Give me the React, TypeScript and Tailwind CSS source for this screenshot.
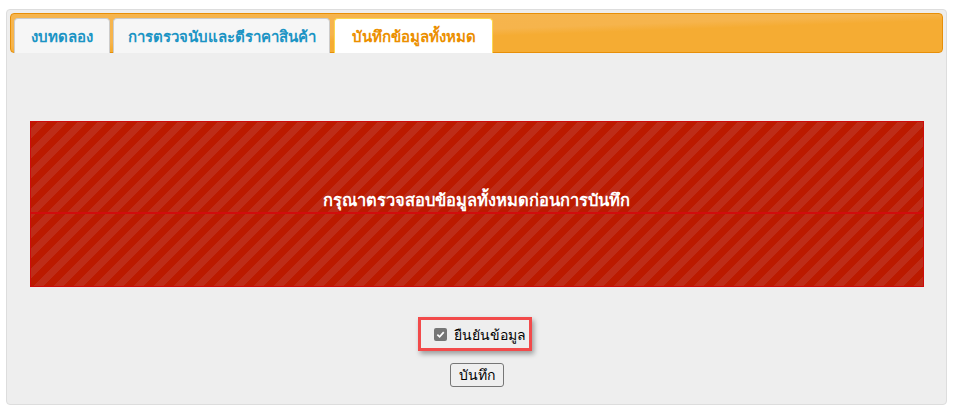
export default function App() {
  const font = { fontFamily: 'Tahoma, "Noto Sans", "Liberation Sans", sans-serif' };
  return (
    <div className="w-[955px] h-[418px] bg-white pt-[9px] pl-[6px]" style={font}>
      <div className="w-[941px] h-[396px] border border-[#dddddd] rounded-[4px] bg-[#eeeeee] p-[3px] flex flex-col">
        <div className="h-[40px] rounded-[4px] border border-[#e78f08] bg-[linear-gradient(178deg,#f6b54e_0%,#f6b44c_45%,#f5ac33_55%,#f5ac33_100%)] flex items-end pl-[3px] gap-[3px]">
          <div className="w-[96px] h-[35px] -mb-px border border-[#cccccc] border-b-0 rounded-t-[4px] bg-[#f6f6f6] flex items-center justify-center text-[15px] font-bold text-[#1c94c4]">
            งบทดลอง
          </div>
          <div className="w-[217px] h-[35px] -mb-px border border-[#cccccc] border-b-0 rounded-t-[4px] bg-[#f6f6f6] flex items-center justify-center text-[15px] font-bold text-[#1c94c4]">
            การตรวจนับและตีราคาสินค้า
          </div>
          <div className="ml-px w-[159px] h-[35px] -mb-px border border-[#fbd850] border-b-0 rounded-t-[4px] bg-white flex items-center justify-center text-[15px] font-bold text-[#eb8f00]">
            บันทึกข้อมูลทั้งหมด
          </div>
        </div>
        <div className="flex flex-col items-center">
          <div className="mt-[68px] w-[894px] h-[166px] border border-[#cd0a0a] bg-[repeating-linear-gradient(-45deg,#be2c18_0px,#be2c18_7px,#bc1a00_7px,#bc1a00_14.14px)] flex flex-col">
            <div className="h-[92px] border-b-2 border-[#d20c0c] flex items-end justify-center pb-[1px]">
              <span className="text-white font-bold text-[16.5px] leading-[22px]">กรุณาตรวจสอบข้อมูลทั้งหมดก่อนการบันทึก</span>
            </div>
          </div>
          <div className="mt-[30px] w-[114px] h-[34px] border-[3px] border-[#f24a4a] shadow-[2px_3px_5px_rgba(0,0,0,0.35)] flex items-center justify-start pl-[13px] gap-[7px] -ml-[4px]">
            <span className="w-[13px] h-[13px] rounded-[2px] bg-[#767676] flex items-center justify-center shrink-0">
              <svg width="9" height="9" viewBox="0 0 10 10">
                <path d="M1.5 5.2 L4 7.6 L8.6 2.4" stroke="white" strokeWidth="1.9" fill="none" />
              </svg>
            </span>
            <span className="text-[14px] text-black whitespace-nowrap">ยืนยันข้อมูล</span>
          </div>
          <button className="mt-[12px] h-[24px] px-[8px] border border-[#767676] rounded-[3px] bg-[#efefef] text-[14px] text-black leading-none">
            บันทึก
          </button>
        </div>
      </div>
    </div>
  );
}
